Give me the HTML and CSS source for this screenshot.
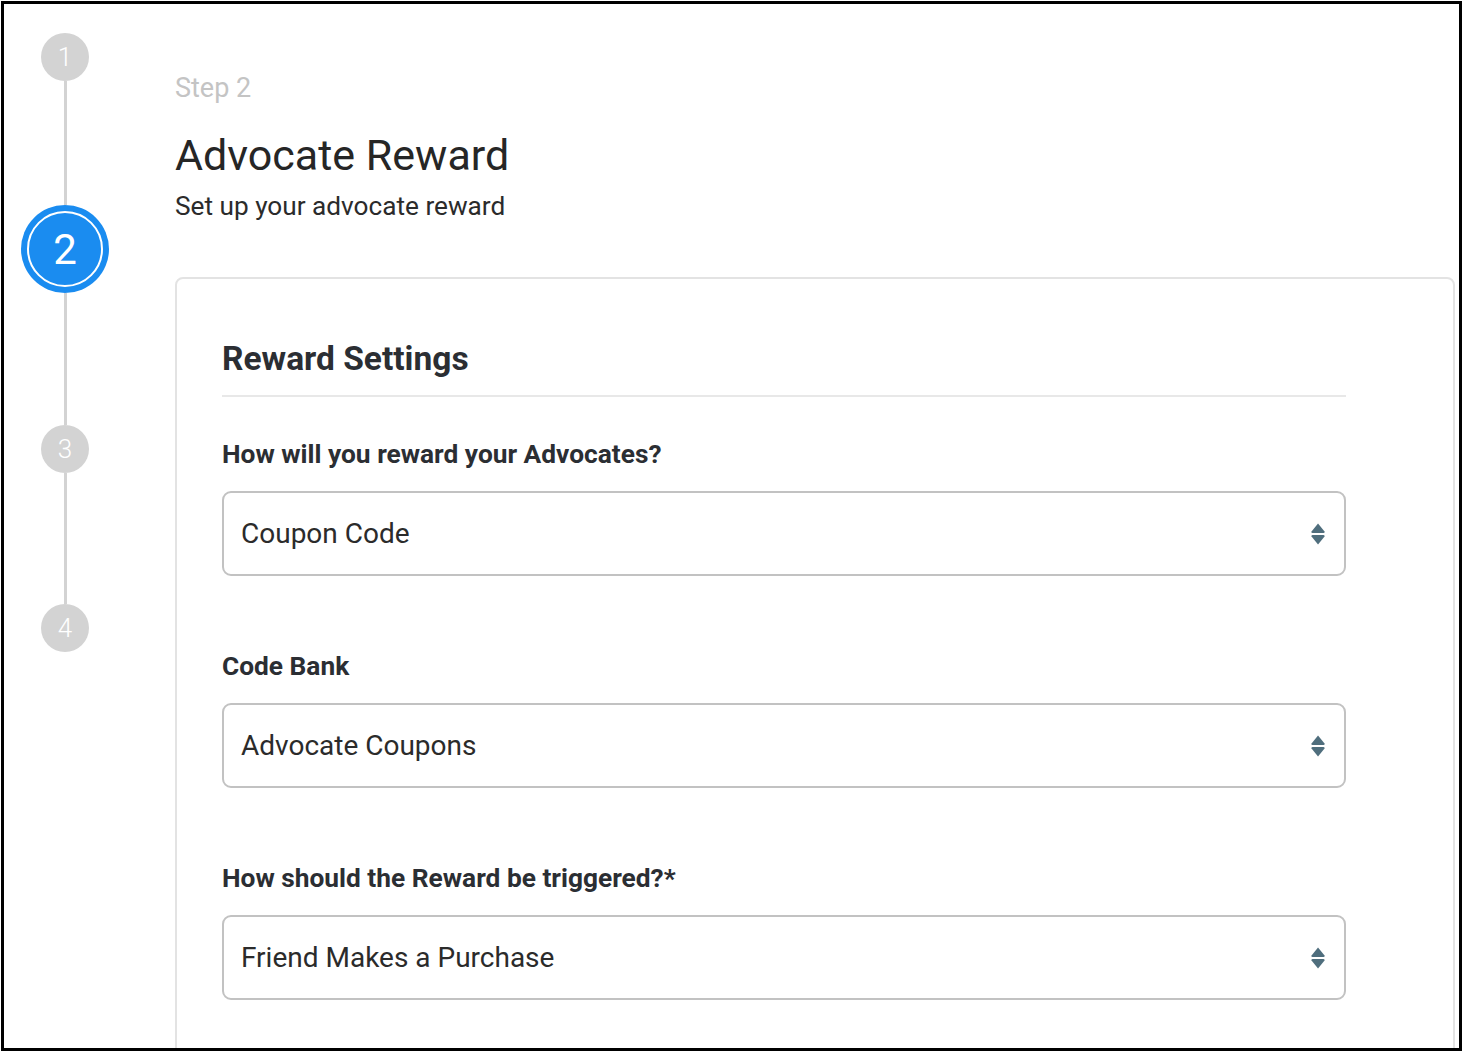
FILE: index.html
```html
<!DOCTYPE html>
<html>
<head>
<meta charset="utf-8">
<link rel="stylesheet" href="styles.css">
</head>
<body>
<div class="frame">
  <div class="stepper">
    <div class="step step-small">1</div>
    <div class="conn conn-a"></div>
    <div class="step step-active"><span class="step-inner">2</span></div>
    <div class="conn conn-b"></div>
    <div class="step step-small">3</div>
    <div class="conn conn-c"></div>
    <div class="step step-small">4</div>
  </div>
  <div class="content">
    <div class="step-label">Step 2</div>
    <h1 class="title">Advocate Reward</h1>
    <div class="subtitle">Set up your advocate reward</div>
    <div class="card">
      <h2 class="card-title">Reward Settings</h2>
      <div class="field">
        <div class="label">How will you reward your Advocates?</div>
        <div class="select"><span>Coupon Code</span>
          <svg class="arrows" width="16" height="24" viewBox="0 0 16 24"><path d="M8 1.5 L14.5 9.5 Q15 11 13.5 11 L2.5 11 Q1 11 1.5 9.5 Z" fill="#4f6e7d"/><path d="M8 22.5 L14.5 14.5 Q15 13 13.5 13 L2.5 13 Q1 13 1.5 14.5 Z" fill="#4f6e7d"/></svg>
        </div>
      </div>
      <div class="field">
        <div class="label">Code Bank</div>
        <div class="select"><span>Advocate Coupons</span>
          <svg class="arrows" width="16" height="24" viewBox="0 0 16 24"><path d="M8 1.5 L14.5 9.5 Q15 11 13.5 11 L2.5 11 Q1 11 1.5 9.5 Z" fill="#4f6e7d"/><path d="M8 22.5 L14.5 14.5 Q15 13 13.5 13 L2.5 13 Q1 13 1.5 14.5 Z" fill="#4f6e7d"/></svg>
        </div>
      </div>
      <div class="field">
        <div class="label">How should the Reward be triggered?*</div>
        <div class="select"><span>Friend Makes a Purchase</span>
          <svg class="arrows" width="16" height="24" viewBox="0 0 16 24"><path d="M8 1.5 L14.5 9.5 Q15 11 13.5 11 L2.5 11 Q1 11 1.5 9.5 Z" fill="#4f6e7d"/><path d="M8 22.5 L14.5 14.5 Q15 13 13.5 13 L2.5 13 Q1 13 1.5 14.5 Z" fill="#4f6e7d"/></svg>
        </div>
      </div>
    </div>
  </div>
</div>
</body>
</html>
```

FILE: styles.css
```css
html, body {
  margin: 0;
  padding: 0;
  background: #ffffff;
}
body {
  font-family: Roboto, "Liberation Sans", sans-serif;
  color: #2b2b2b;
}
.frame {
  box-sizing: border-box;
  margin: 1px 0 0 1px;
  width: 1461px;
  height: 1050px;
  border: 3px solid #000;
  display: flex;
  overflow: hidden;
  background: #fff;
}
.stepper {
  width: 122px;
  flex: none;
  display: flex;
  flex-direction: column;
  align-items: center;
  padding-top: 29px;
}
.step {
  flex: none;
  border-radius: 50%;
  display: flex;
  align-items: center;
  justify-content: center;
  color: #fff;
}
.step-small {
  width: 48px;
  height: 48px;
  background: #d3d3d3;
  font-size: 26px;
  font-weight: 300;
}
.step-active {
  width: 88px;
  height: 88px;
  background: #1a8cf0;
}
.step-inner {
  width: 76px;
  height: 76px;
  border-radius: 50%;
  border: 2px solid #fff;
  box-sizing: border-box;
  display: flex;
  align-items: center;
  justify-content: center;
  font-size: 42px;
  font-weight: 400;
  background: #1a8cf0;
}
.conn {
  width: 3px;
  background: #d3d3d3;
  flex: none;
}
.conn-a { height: 124px; }
.conn-b { height: 132px; }
.conn-c { height: 131px; }
.content {
  flex: 1;
  padding-top: 69px;
  padding-left: 49px;
  min-width: 0;
}
.step-label {
  font-size: 27px;
  color: #c4c4c4;
  line-height: 30px;
}
.title {
  margin: 27px 0 0 0;
  font-size: 43px;
  font-weight: 400;
  line-height: 50px;
  color: #262626;
}
.subtitle {
  margin-top: 10px;
  font-size: 26.2px;
  line-height: 32px;
  color: #2b2b2b;
}
.card {
  margin-top: 55px;
  width: 1280px;
  box-sizing: border-box;
  border: 2px solid #e3e3e3;
  border-radius: 8px;
  padding: 60px 107px 60px 45px;
  height: 900px;
}
.card-title {
  margin: 0;
  font-size: 33.5px;
  font-weight: 700;
  line-height: 40px;
  color: #2b2e33;
  padding-bottom: 16px;
  border-bottom: 2px solid #e8e8e8;
}
.field {
  margin-top: 41px;
}
.field + .field {
  margin-top: 74px;
}
.label {
  font-size: 26.3px;
  font-weight: 700;
  color: #2b2e33;
  line-height: 32px;
}
.select {
  margin-top: 21px;
  height: 85px;
  box-sizing: border-box;
  border: 2px solid #c2c2c2;
  border-radius: 9px;
  display: flex;
  align-items: center;
  justify-content: space-between;
  padding: 0 18px 0 17px;
  font-size: 28px;
  color: #2b2b2b;
}
.arrows {
  flex: none;
}
```
